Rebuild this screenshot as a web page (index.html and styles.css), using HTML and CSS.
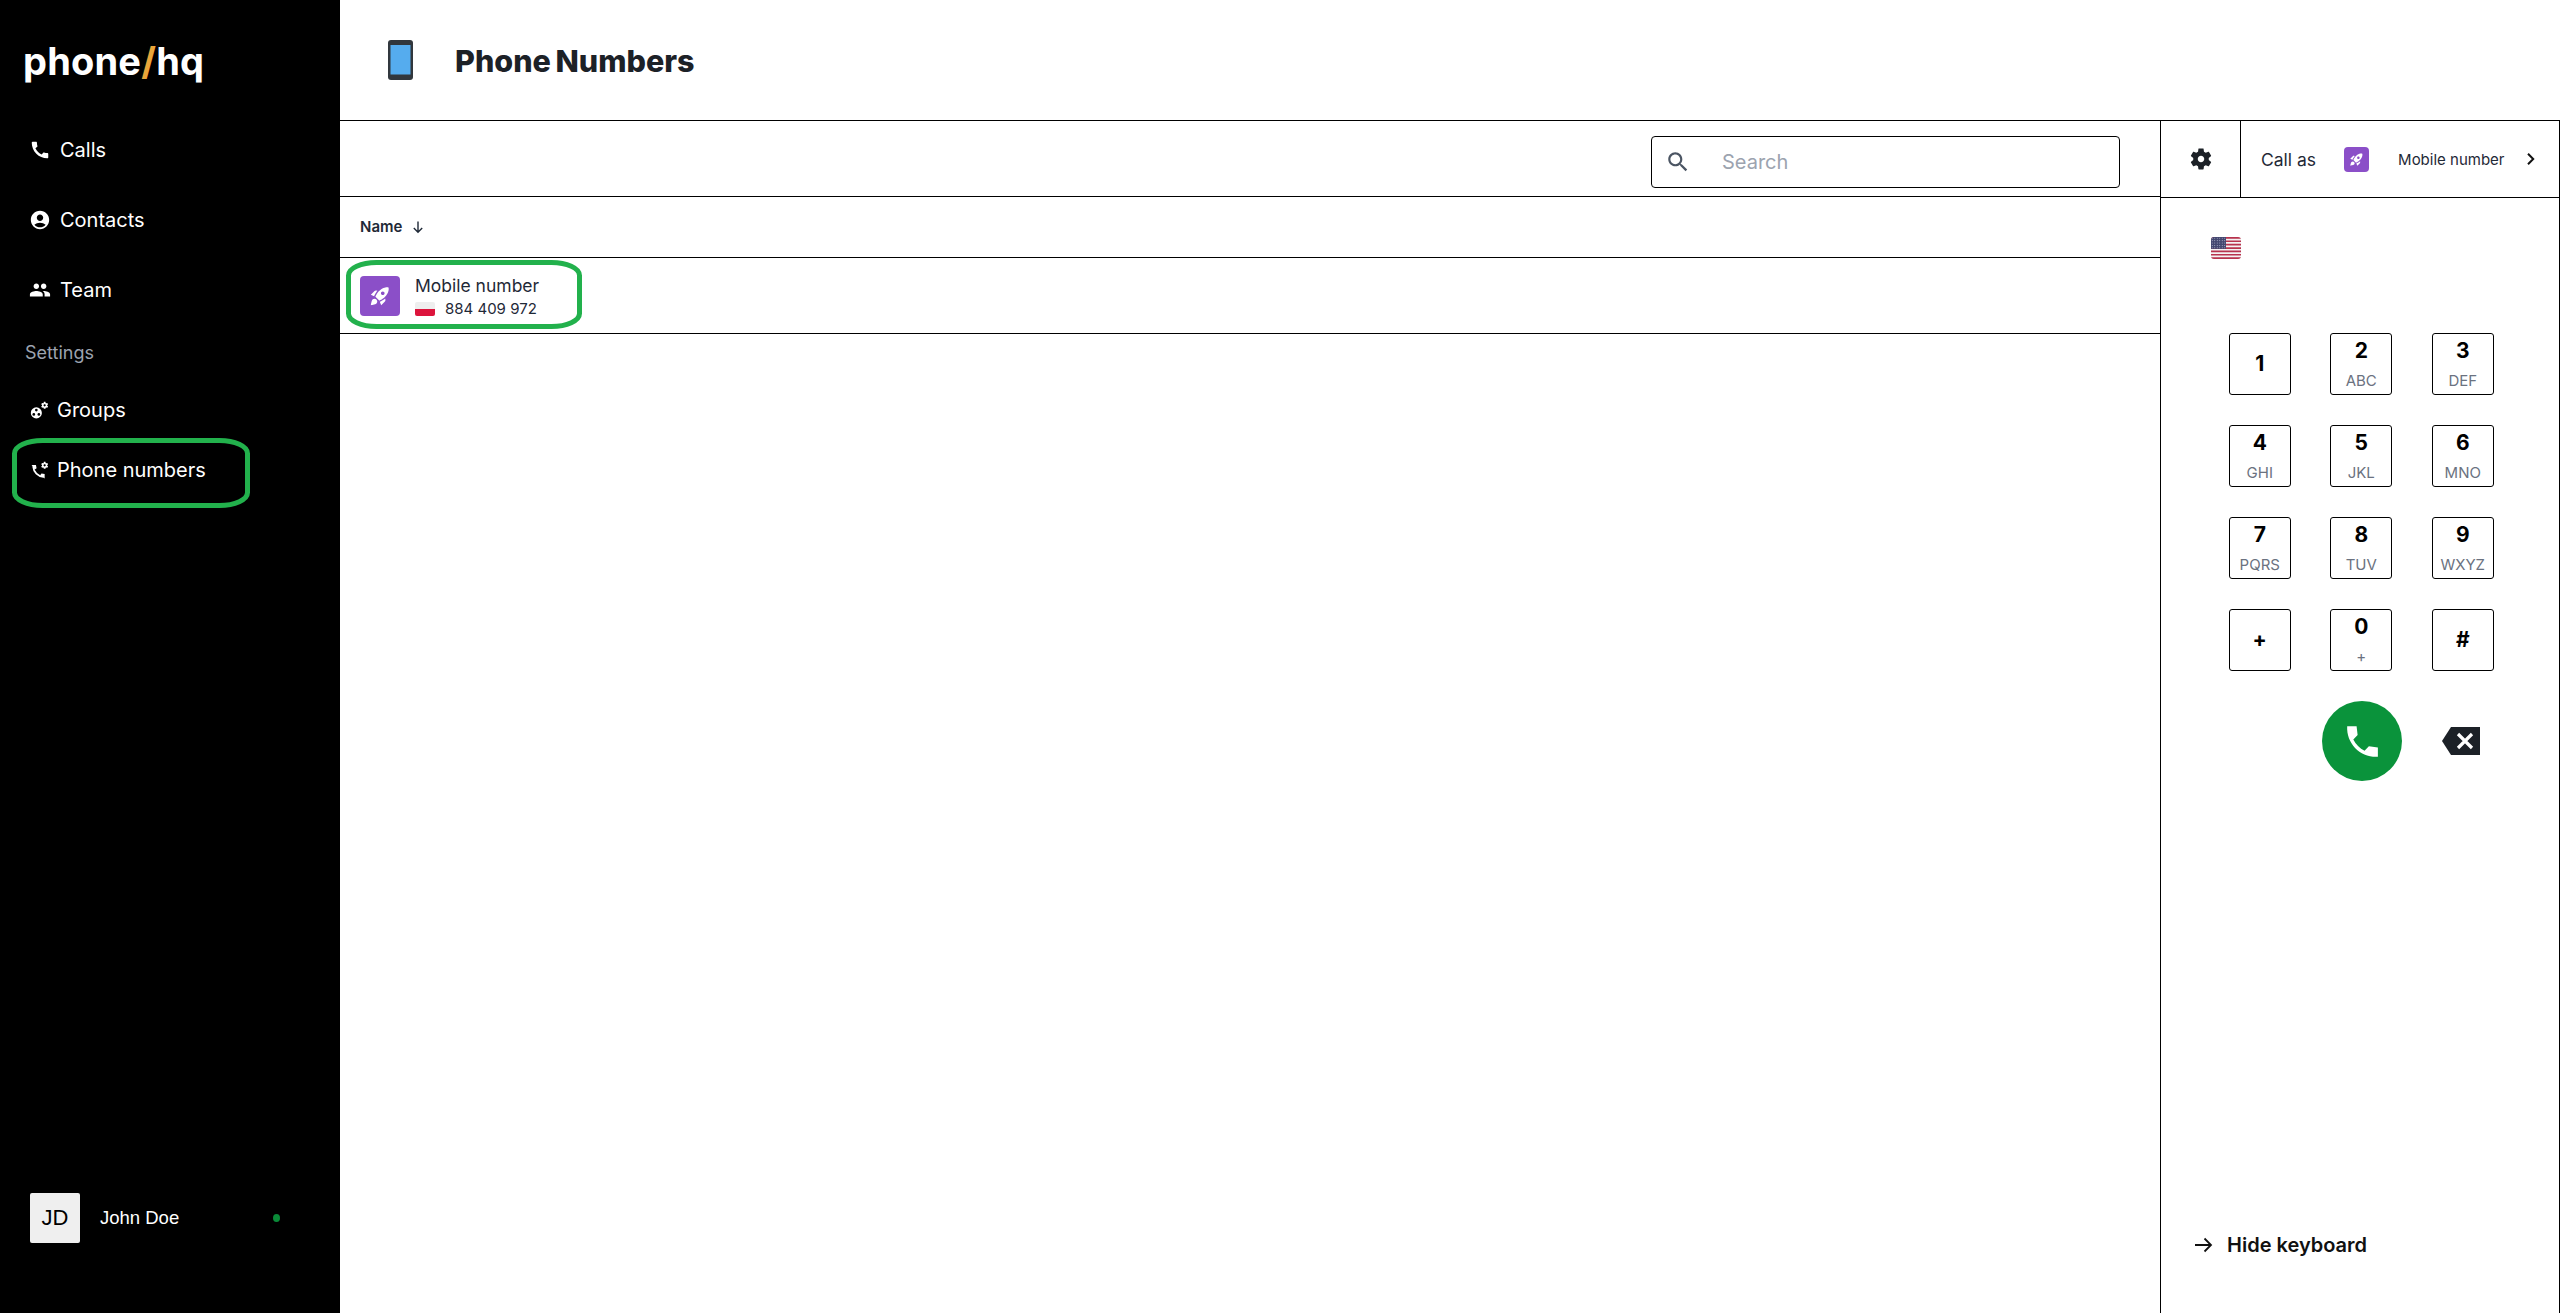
FILE: index.html
```html
<!DOCTYPE html>
<html lang="en">
<head>
<meta charset="utf-8">
<title>Phone Numbers</title>
<link rel="stylesheet" href="styles.css">
</head>
<body>
<svg class="sprites" width="0" height="0" aria-hidden="true">
  <symbol id="i-call" viewBox="0 0 24 24"><path d="M20.01 15.38c-1.23 0-2.42-.2-3.53-.56-.35-.12-.74-.03-1.01.24l-1.57 1.97c-2.83-1.35-5.48-3.9-6.89-6.83l1.95-1.66c.27-.28.35-.67.24-1.02-.37-1.11-.56-2.3-.56-3.53 0-.54-.45-.99-.99-.99H4.19C3.65 3 3 3.24 3 3.99 3 13.28 10.73 21 20.01 21c.71 0 .99-.63.99-1.18v-3.45c0-.54-.45-.99-.99-.99z"/></symbol>
  <symbol id="i-rocket" viewBox="0 0 24 24"><path d="M9.19 6.35c-2.04 2.29-3.44 5.58-3.57 5.89L2 10.69l4.05-4.05c.47-.47 1.15-.68 1.81-.55l1.33.26zM11.17 17s3.74-1.55 5.89-3.7c5.4-5.4 4.5-9.62 4.21-10.57-.95-.3-5.17-1.19-10.57 4.21C8.55 9.09 7 12.83 7 12.83L11.17 17zm6.48-2.19c-2.29 2.04-5.58 3.44-5.89 3.57L13.31 22l4.05-4.05c.47-.47.68-1.15.55-1.81l-.26-1.33zM9 18c0 .83-.34 1.58-.88 2.12C6.94 21.3 2 22 2 22s.7-4.94 1.88-6.12C4.42 15.34 5.17 15 6 15c1.66 0 3 1.34 3 3zm4-9c0-1.1.9-2 2-2s2 .9 2 2-.9 2-2 2-2-.9-2-2z"/></symbol>
  <symbol id="i-gear" viewBox="0 0 24 24"><path fill-rule="evenodd" d="M19.14 12.94c.04-.3.06-.61.06-.94 0-.32-.02-.64-.07-.94l2.03-1.58c.18-.14.23-.41.12-.61l-1.92-3.32c-.12-.22-.37-.29-.59-.22l-2.39.96c-.5-.38-1.03-.7-1.62-.94l-.36-2.54c-.04-.24-.24-.41-.48-.41h-3.84c-.24 0-.43.17-.47.41l-.36 2.54c-.59.24-1.13.57-1.62.94l-2.39-.96c-.22-.08-.47 0-.59.22L2.74 8.87c-.12.21-.08.47.12.61l2.03 1.58c-.05.3-.09.63-.09.94s.02.64.07.94l-2.03 1.58c-.18.14-.23.41-.12.61l1.92 3.32c.12.22.37.29.59.22l2.39-.96c.5.38 1.03.7 1.62.94l.36 2.54c.05.24.24.41.48.41h3.84c.24 0 .44-.17.47-.41l.36-2.54c.59-.24 1.13-.56 1.62-.94l2.39.96c.22.08.47 0 .59-.22l1.92-3.32c.12-.22.07-.47-.12-.61l-2.01-1.58zM12 15c-1.65 0-3-1.35-3-3s1.35-3 3-3 3 1.35 3 3-1.35 3-3 3z"/></symbol>
  <clipPath id="flag-clip"><rect width="30" height="22" rx="3"/></clipPath>
  <pattern id="flag-stars" width="2.5" height="2.400" patternUnits="userSpaceOnUse"><rect width="2.5" height="2.400" fill="#42466f"/><circle cx="1.250" cy="1.200" r=".5" fill="#c9cbe0"/></pattern>
</svg>
<div class="app">
  <aside class="sidebar">
    <div class="logo">phone<span class="logo-slash">/</span>hq</div>
    <nav class="nav">
      <a class="nav-item"><svg class="nav-icon" viewBox="0 0 24 24"><use href="#i-call"/></svg>Calls</a>
      <a class="nav-item"><svg class="nav-icon" viewBox="0 0 24 24"><path d="M12 2C6.48 2 2 6.48 2 12s4.48 10 10 10 10-4.48 10-10S17.52 2 12 2zm0 4c1.93 0 3.5 1.57 3.5 3.5S13.93 13 12 13s-3.5-1.57-3.5-3.5S10.07 6 12 6zm0 14c-2.03 0-4.43-.82-6.14-2.88C7.55 15.8 9.68 15 12 15s4.45.8 6.14 2.12C16.43 19.18 14.03 20 12 20z"/></svg>Contacts</a>
      <a class="nav-item"><svg class="nav-icon" viewBox="0 0 24 24"><path d="M16 11c1.66 0 2.99-1.34 2.99-3S17.66 5 16 5c-1.66 0-3 1.34-3 3s1.34 3 3 3zm-8 0c1.66 0 2.99-1.34 2.99-3S9.66 5 8 5C6.34 5 5 6.34 5 8s1.34 3 3 3zm0 2c-2.33 0-7 1.17-7 3.5V19h14v-2.5c0-2.33-4.67-3.5-7-3.5zm8 0c-.29 0-.62.02-.97.05 1.16.84 1.97 1.97 1.97 3.45V19h6v-2.5c0-2.33-4.67-3.5-7-3.5z"/></svg>Team</a>
    </nav>
    <div class="nav-heading">Settings</div>
    <nav class="nav-sub">
      <a class="nav-item nav-item-sub"><svg class="nav-icon nav-icon-sub" viewBox="0 0 24 24"><circle cx="8" cy="15" r="7"/><circle cx="8" cy="11.500" r="1.700" fill="#000"/><circle cx="4.800" cy="17" r="1.700" fill="#000"/><circle cx="11.200" cy="17" r="1.700" fill="#000"/><use href="#i-gear" x="13" y="0" width="11" height="11"/></svg>Groups</a>
      <a class="nav-item nav-item-sub"><svg class="nav-icon nav-icon-sub" viewBox="0 0 24 24"><path d="M4 7C4.500 14 10 19.500 17 20" fill="none" stroke="#fff" stroke-width="2.200"/><path d="M2 5h5.500l.8 4-2.300 1.700zM18.500 22v-5.500l-4-.8-1.700 2.300z"/><use href="#i-gear" x="13" y="0" width="11" height="11"/></svg>Phone numbers</a>
    </nav>
    <div class="user">
      <div class="avatar">JD</div>
      <span class="user-name">John Doe</span>
      <span class="status-dot"></span>
    </div>
  </aside>

  <main class="main">
    <header class="page-header">
      <svg class="device-icon" viewBox="0 0 25 40" width="25" height="40"><rect width="25" height="40" rx="3" fill="#31373d"/><rect x="2.500" y="5" width="20" height="29.500" fill="#55acee"/></svg>
      <h1 class="page-title">Phone Numbers</h1>
    </header>
    <div class="content">
      <section class="list">
        <div class="toolbar">
          <div class="search">
            <svg class="search-icon" viewBox="0 0 24 24"><path d="M15.500 14h-.79l-.28-.27C15.410 12.590 16 11.110 16 9.500 16 5.910 13.090 3 9.500 3S3 5.910 3 9.500 5.910 16 9.500 16c1.610 0 3.090-.59 4.230-1.570l.27.28v.79l5 4.990L20.490 19l-4.990-5zm-6 0C7.010 14 5 11.990 5 9.500S7.010 5 9.500 5 14 7.010 14 9.500 11.990 14 9.500 14z"/></svg>
            <span class="search-placeholder">Search</span>
          </div>
        </div>
        <div class="table-head">
          <span class="col-name">Name</span>
          <svg class="sort-icon" viewBox="0 0 12 14"><path d="M6 1.500v10.500M1.800 8 6 12.200 10.200 8" fill="none" stroke="#1f2937" stroke-width="1.400"/></svg>
        </div>
        <div class="table-row">
          <div class="num-badge"><svg class="rocket" viewBox="0 0 24 24"><use href="#i-rocket"/></svg></div>
          <div class="num-info">
            <div class="num-name">Mobile number</div>
            <div class="num-line">
              <span class="flag-pl"></span>
              <span class="num-value">884 409 972</span>
            </div>
          </div>
        </div>
      </section>

      <aside class="dialer">
        <div class="dialer-head">
          <div class="gear-cell"><svg class="gear" viewBox="0 0 24 24"><use href="#i-gear"/></svg></div>
          <div class="call-as">
            <span class="call-as-label">Call as</span>
            <span class="num-badge-sm"><svg class="rocket-sm" viewBox="0 0 24 24"><use href="#i-rocket"/></svg></span>
            <span class="call-as-name">Mobile number</span>
            <svg class="chevron" viewBox="0 0 10 14"><path d="M2 1.800 7.200 7 2 12.200" fill="none" stroke="#111" stroke-width="2"/></svg>
          </div>
        </div>
        <div class="flag-row">
          <svg class="flag-us" viewBox="0 0 30 22">
            <g clip-path="url(#flag-clip)">
              <rect width="30" height="22" fill="#f4f2f2"/>
              <path d="M0 0h30v1.700H0zM0 3.400h30v1.700H0zM0 6.800h30v1.700H0zM0 10.200h30v1.700H0zM0 13.500h30v1.700H0zM0 16.900h30v1.700H0zM0 20.300h30V22H0z" fill="#b7334e"/>
              <rect width="15" height="11.900" fill="url(#flag-stars)"/>
            </g>
          </svg>
        </div>
        <div class="keypad">
          <button class="key"><span class="key-digit">1</span></button>
          <button class="key"><span class="key-digit">2</span><span class="key-sub">ABC</span></button>
          <button class="key"><span class="key-digit">3</span><span class="key-sub">DEF</span></button>
          <button class="key"><span class="key-digit">4</span><span class="key-sub">GHI</span></button>
          <button class="key"><span class="key-digit">5</span><span class="key-sub">JKL</span></button>
          <button class="key"><span class="key-digit">6</span><span class="key-sub">MNO</span></button>
          <button class="key"><span class="key-digit">7</span><span class="key-sub">PQRS</span></button>
          <button class="key"><span class="key-digit">8</span><span class="key-sub">TUV</span></button>
          <button class="key"><span class="key-digit">9</span><span class="key-sub">WXYZ</span></button>
          <button class="key"><span class="key-digit">+</span></button>
          <button class="key"><span class="key-digit">0</span><span class="key-sub">+</span></button>
          <button class="key"><span class="key-digit">#</span></button>
        </div>
        <div class="call-row">
          <button class="call-btn"><svg class="call-icon" viewBox="0 0 24 24"><path d="M21 15.460l-5.270-.61-2.520 2.520c-2.830-1.440-5.150-3.750-6.590-6.590l2.530-2.530L8.540 3H3.030C2.450 13.180 10.820 21.550 21 20.970v-5.510z"/></svg></button>
          <svg class="backspace" viewBox="0 0 38 28"><path fill="#1c2127" d="M9 0h29v28H9L0 14z"/><path d="M16 7l14 14M30 7 16 21" fill="none" stroke="#fff" stroke-width="3.200"/></svg>
        </div>
        <div class="hide-kb">
          <svg class="arrow" viewBox="0 0 18 16"><path d="M0 8h16M9.500 1.500 16 8l-6.500 6.500" fill="none" stroke="#111" stroke-width="1.800"/></svg>
          <span>Hide keyboard</span>
        </div>
      </aside>
    </div>
  </main>
</div>
<svg class="mark mark-nav" viewBox="0 0 238 70"><rect x="2.500" y="2.500" width="233" height="65" rx="28" ry="13" fill="none" stroke="#22b14c" stroke-width="5"/></svg>
<svg class="mark mark-row" viewBox="0 0 236 69"><rect x="2.500" y="2.500" width="231" height="64" rx="28" ry="13" fill="none" stroke="#22b14c" stroke-width="5"/></svg>
</body>
</html>
```
FILE: styles.css
```css
* { box-sizing: border-box; }
html, body { margin: 0; height: 100%; }
body { font-family: Inter, "Liberation Sans", sans-serif; background: #fff; color: #1f2937; overflow: hidden; }
.sprites { position: absolute; }
.app { display: flex; height: 1313px; }

.sidebar { width: 340px; flex: none; background: #000; color: #fff; display: flex; flex-direction: column; padding-left: 24px; }
.logo { font-size: 38px; font-weight: 700; line-height: 46px; letter-spacing: 0.2px; margin: 38px 0 0 -1px; }
.logo-slash { color: #e9a53a; }
.nav { margin-top: 31px; padding-left: 5px; display: flex; flex-direction: column; }
.nav-item { display: flex; align-items: center; height: 70px; font-size: 20px; line-height: 24px; gap: 9px; color: #fff; }
.nav-icon { width: 22px; height: 22px; fill: #fff; flex: none; }
.nav-heading { font-size: 18px; line-height: 24px; color: #9ca3af; margin: 16px 0 0 1px; }
.nav-sub { margin-top: 15px; padding-left: 6px; display: flex; flex-direction: column; }
.nav-item-sub { height: 60px; gap: 8px; }
.nav-icon-sub { width: 19px; height: 19px; }
.user { margin-top: auto; margin-bottom: 70px; margin-left: 6px; display: flex; align-items: center; width: 250px; }
.avatar { width: 50px; height: 50px; background: #efefef; color: #000; border-radius: 2px; font-family: "Liberation Sans", sans-serif; font-size: 22px; display: flex; align-items: center; justify-content: center; }
.user-name { font-family: "Liberation Sans", sans-serif; font-size: 18.500px; margin-left: 20px; }
.status-dot { width: 7px; height: 8px; border-radius: 50%; background: #0a8a38; margin-left: auto; }

.main { flex: 1; min-width: 0; display: flex; flex-direction: column; }
.page-header { height: 120px; flex: none; display: flex; align-items: center; padding-left: 48px; gap: 42px; }
.device-icon { flex: none; }
.page-title { font-size: 30.500px; font-weight: 800; word-spacing: -2px; margin: 0; color: #1c2127; }

.content { flex: 1; display: flex; border-top: 1px solid #000; min-height: 0; }
.list { flex: 1; min-width: 0; display: flex; flex-direction: column; }
.toolbar { height: 76px; flex: none; display: flex; justify-content: flex-end; align-items: flex-start; padding: 15px 40px 0 0; border-bottom: 1px solid #000; }
.search { width: 469px; height: 52px; border: 1px solid #000; border-radius: 4px; display: flex; align-items: center; padding-left: 13px; }
.search-icon { width: 26px; height: 26px; fill: #4b5563; flex: none; }
.search-placeholder { font-size: 20px; color: #9ca3af; margin-left: 31px; }
.table-head { height: 61px; flex: none; display: flex; align-items: center; padding: 0 0 1px 20px; gap: 10px; border-bottom: 1px solid #000; }
.col-name { font-size: 15px; font-weight: 600; color: #1f2937; }
.sort-icon { width: 12px; height: 14px; }
.table-row { height: 76px; flex: none; display: flex; align-items: center; padding-left: 20px; gap: 15px; border-bottom: 1px solid #000; }
.num-badge { width: 40px; height: 40px; background: #8b4fc8; border-radius: 4px; display: flex; align-items: center; justify-content: center; flex: none; }
.rocket { width: 22px; height: 22px; fill: #fff; }
.num-info { display: flex; flex-direction: column; gap: 2px; padding-top: 2px; }
.num-name { font-size: 17.500px; line-height: 22px; color: #1f2937; }
.num-line { display: flex; align-items: center; gap: 10px; }
.flag-pl { width: 20px; height: 14px; border-radius: 2px; background: linear-gradient(#eeeeee 50%, #dc143c 50%); }
.num-value { font-size: 15px; line-height: 20px; color: #1f2937; }

.dialer { width: 400px; flex: none; border-left: 1px solid #000; border-right: 1px solid #000; display: flex; flex-direction: column; }
.dialer-head { display: flex; height: 77px; flex: none; border-bottom: 1px solid #000; }
.gear-cell { width: 80px; flex: none; border-right: 1px solid #000; display: flex; align-items: center; justify-content: center; }
.gear { width: 26px; height: 26px; fill: #1c2127; }
.call-as { flex: 1; display: flex; align-items: center; padding-left: 20px; }
.call-as-label { font-size: 17.500px; color: #1f2937; }
.num-badge-sm { width: 25px; height: 25px; background: #8b4fc8; border-radius: 4px; display: flex; align-items: center; justify-content: center; margin-left: 28px; }
.rocket-sm { width: 15px; height: 15px; fill: #fff; }
.call-as-name { font-size: 15px; color: #1f2937; margin-left: 29px; }
.chevron { width: 10px; height: 14px; margin-left: 22px; }

.flag-row { padding: 39px 0 0 50px; height: 135px; flex: none; }
.flag-us { width: 30px; height: 22px; display: block; }
.keypad { display: grid; grid-template-columns: repeat(3, 62px); column-gap: 39.500px; row-gap: 30px; padding-left: 67.750px; }
.key { width: 62px; height: 62px; padding: 0; background: #fff; border: 1px solid #000; border-radius: 3px; display: flex; flex-direction: column; align-items: center; justify-content: center; font-family: inherit; gap: 9px; }
.key-digit { font-size: 21px; line-height: 24px; font-weight: 700; color: #000; }
.key-sub { font-size: 15px; line-height: 18px; color: #6b7280; }
.call-row { display: flex; align-items: center; height: 80px; margin-top: 30px; padding-left: 161px; flex: none; }
.call-btn { width: 80px; height: 80px; border-radius: 50%; background: #0a933b; border: 0; padding: 0; display: flex; align-items: center; justify-content: center; }
.call-icon { width: 41px; height: 41px; fill: #fff; }
.backspace { width: 38px; height: 28px; margin-left: 40px; }
.hide-kb { margin-top: auto; margin-bottom: 56px; padding-left: 34px; display: flex; align-items: center; gap: 14px; font-size: 20px; font-weight: 600; color: #111; }
.arrow { width: 18px; height: 16px; }

.mark { position: absolute; pointer-events: none; }
.mark-nav { left: 12px; top: 438px; width: 238px; height: 70px; }
.mark-row { left: 346px; top: 260px; width: 236px; height: 69px; }
```
